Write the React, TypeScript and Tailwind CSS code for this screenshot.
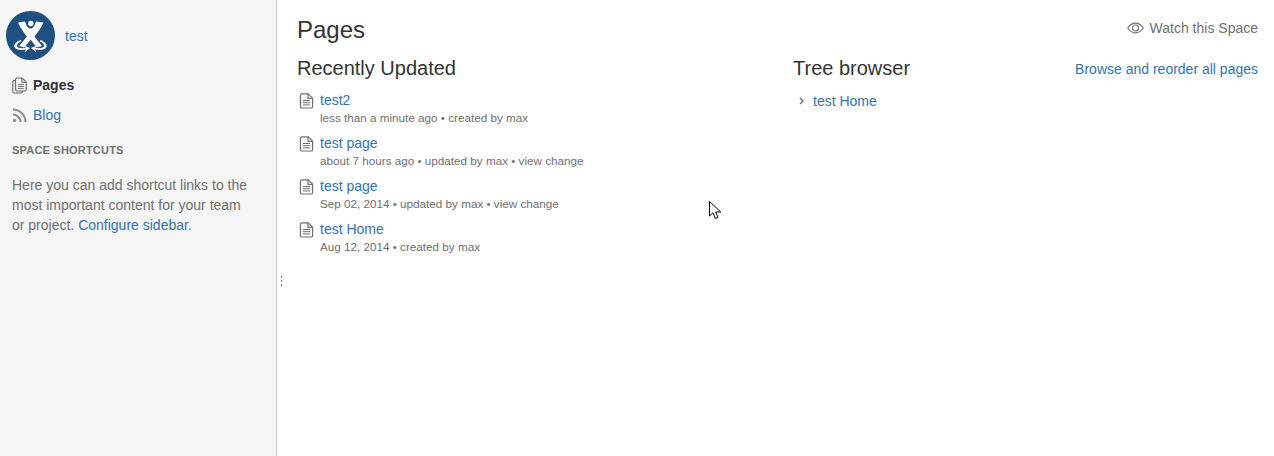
import React from "react";

const PageIcon = () => (
  <svg width="15" height="16" viewBox="0 0 15 16" fill="none" stroke="#707070" strokeWidth="1.2" className="shrink-0">
    <path d="M3 0.8H9.2L13.6 5.2V13.4C13.6 14.4 13 15 12 15H3C2 15 1.4 14.4 1.4 13.4V2.4C1.4 1.4 2 0.8 3 0.8Z" />
    <path d="M9 1V5.4H13.4" />
    <path d="M4 7.5H11M4 9.7H11M4 11.9H11" strokeWidth="1" />
  </svg>
);

const Logo = () => (
  <svg width="49" height="49" viewBox="0 0 49 49" className="shrink-0">
    <circle cx="24.5" cy="24.5" r="24.5" fill="#205081" />
    <path d="M12 11.5L19 10.5C20.5 15 22 17.5 24.5 17.5C27 17.5 28.5 15 30 10.5L37.5 11.5C35 17 31.5 22 28.5 25.5C31 29 33.5 32 36 35L31 36.5C28.5 33.5 26.5 31 24.7 28.7C22.7 31 20.5 33.5 18 36.5L13 35C15.5 32 18.2 29 20.8 25.5C17.8 21.5 14.5 17 12 11.5Z" fill="#fff" />
    <circle cx="24.8" cy="12.5" r="2.7" fill="#fff" />
    <path d="M14.5 29C10 31 7.5 33.5 8.5 36C9.5 38.5 14 39.5 20 38.5L18.5 41.5L24 37L18.5 34.5L19.5 37C15 37.5 11.5 36.8 11 35.2C10.5 33.5 12.5 31.5 15.5 30Z" fill="#fff" />
    <path d="M34.5 29C39 31 41.5 33.5 40.5 36C39.5 38.5 35 39.5 29 38.5L30.5 41.5L25 37L30.5 34.5L29.5 37C34 37.5 37.5 36.8 38 35.2C38.5 33.5 36.5 31.5 33.5 30Z" fill="#fff" />
  </svg>
);

const rows = [
  { t: "test2", m: <>less than a minute ago • created by max</> },
  { t: "test page", m: <>about 7 hours ago • updated by max • view change</> },
  { t: "test page", m: <>Sep 02, 2014 • updated by max • view change</> },
  { t: "test Home", m: <>Aug 12, 2014 • created by max</> },
];

export default function App() {
  return (
    <div className="relative flex h-[456px] w-[1274px] overflow-hidden bg-white font-['Liberation_Sans',Arial,sans-serif] text-[14px] leading-[20px] text-[#333333]">
      <aside className="w-[277px] shrink-0 border-r border-[#cccccc] bg-[#f5f5f5] pl-[6px]">
        <div className="mt-[11px] flex items-center gap-[10px]">
          <Logo />
          <a className="text-[#3572b0]">test</a>
        </div>
        <div className="mt-[10px] flex h-[30px] items-center gap-[6px] pl-[6px]">
          <svg width="15" height="17" viewBox="0 0 15 17" fill="none" stroke="#666666" strokeWidth="1.1" className="shrink-0">
            <path d="M3 3.5H2.2C1.4 3.5 0.8 4.1 0.8 4.9V14.6C0.8 15.5 1.4 16 2.2 16H9C9.9 16 10.4 15.5 10.4 14.6V14" />
            <path d="M5 1H10L14.2 5V12.6C14.2 13.4 13.7 14 12.8 14H5C4.2 14 3.6 13.4 3.6 12.6V2.4C3.6 1.6 4.2 1 5 1Z" />
            <path d="M9.8 1.2V5.2H14" />
            <path d="M6 7.6H11.8M6 9.5H11.8M6 11.4H11.8" strokeWidth="0.9" />
          </svg>
          <span className="font-bold">Pages</span>
        </div>
        <div className="flex h-[30px] items-center gap-[6px] pl-[6px]">
          <svg width="15" height="15" viewBox="0 0 15 15" fill="none" stroke="#8c8c8c" strokeWidth="2" className="shrink-0">
            <path d="M1 1.5C7.8 1.5 13.5 7.2 13.5 14" />
            <path d="M1 6.5C5.1 6.5 8.5 9.9 8.5 14" />
            <circle cx="2.6" cy="12.4" r="1.7" fill="#8c8c8c" stroke="none" />
          </svg>
          <a className="text-[#3572b0]">Blog</a>
        </div>
        <h5 className="mt-[10px] pl-[6px] text-[11px] leading-[20px] font-bold tracking-[0.2px] text-[#707070]">SPACE SHORTCUTS</h5>
        <p className="mt-[15px] w-[250px] pl-[6px] text-[#707070]">
          Here you can add shortcut links to the most important content for your team or project. <a className="text-[#3572b0]">Configure sidebar</a>.
        </p>
      </aside>

      <main className="min-w-0 flex-1 pr-[16px] pl-[20px]">
        <div className="mt-[15px] flex items-start justify-between">
          <h1 className="text-[24px] leading-[30px] font-normal">Pages</h1>
          <div className="mt-[3px] flex items-center gap-[6px] text-[#707070]">
            <svg width="17" height="12" viewBox="0 0 17 12" fill="none" stroke="#707070" strokeWidth="1.2">
              <path d="M0.8 6C2.8 3 5.5 1.2 8.5 1.2C11.5 1.2 14.2 3 16.2 6C14.2 9 11.5 10.8 8.5 10.8C5.5 10.8 2.8 9 0.8 6Z" />
              <circle cx="8.5" cy="6" r="3" />
            </svg>
            <span>Watch this Space</span>
          </div>
        </div>
        <div className="mt-[2px] flex">
          <section className="w-[496px] shrink-0">
            <h2 className="mt-[9px] text-[20px] leading-[24px] font-normal">Recently Updated</h2>
            <ul className="mt-[10px]">
              {rows.map((r, i) => (
                <li key={i} className="flex h-[43px] gap-[6px] pl-[2px]">
                  <div className="mt-[3px]"><PageIcon /></div>
                  <div>
                    <a className="block leading-[20px] text-[#3572b0]">{r.t}</a>
                    <div className="text-[11.7px] leading-[16px] text-[#707070]">{r.m}</div>
                  </div>
                </li>
              ))}
            </ul>
          </section>
          <section className="min-w-0 flex-1">
            <div className="mt-[9px] flex items-start justify-between">
              <h2 className="text-[20px] leading-[24px] font-normal">Tree browser</h2>
              <a className="mt-[3px] text-[#3572b0]">Browse and reorder all pages</a>
            </div>
            <div className="mt-[11px] flex items-center gap-[9px] pl-[6px]">
              <svg width="5" height="8" viewBox="0 0 5 8" fill="none" stroke="#707070" strokeWidth="1.3"><path d="M1 1L4 4L1 7" /></svg>
              <a className="text-[#3572b0]">test Home</a>
            </div>
          </section>
        </div>
      </main>

      <div className="absolute top-[276px] left-[281px] flex flex-col gap-[2px]">
        <span className="h-[2px] w-[1px] bg-[#888888]" />
        <span className="h-[2px] w-[1px] bg-[#888888]" />
        <span className="h-[2px] w-[1px] bg-[#888888]" />
      </div>

      <svg className="absolute top-[201px] left-[709px]" width="13" height="19" viewBox="0 0 13 19" fill="#fff" stroke="#000" strokeWidth="1">
        <path d="M0.5 0.5V15L4 11.8L6.5 17.5L9 16.4L6.6 11H11.8Z" />
      </svg>
    </div>
  );
}
